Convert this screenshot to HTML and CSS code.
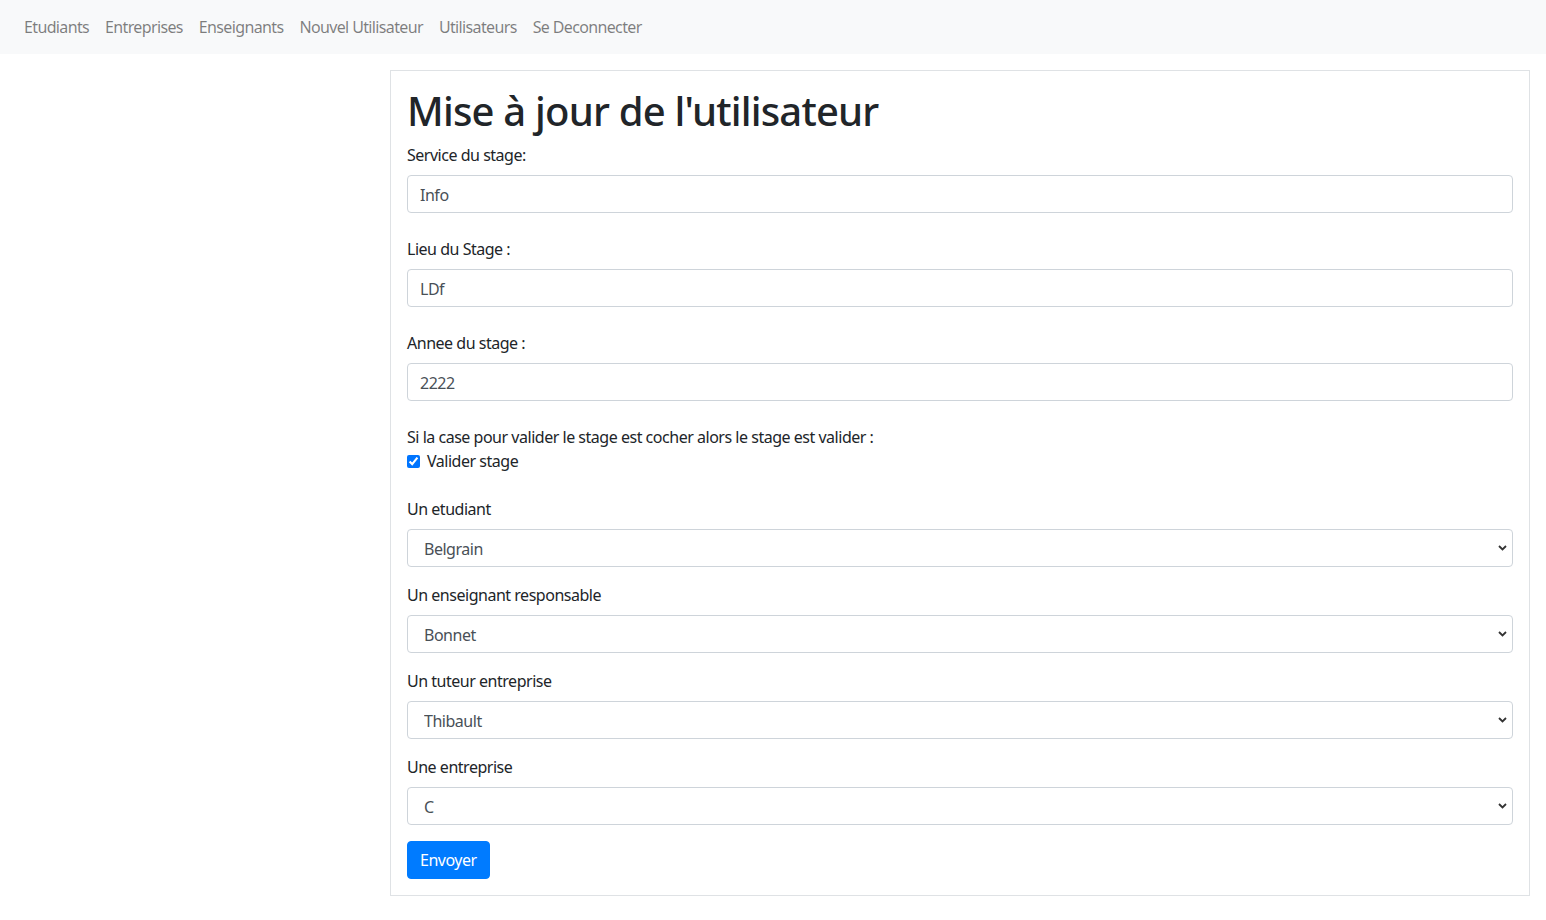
FILE: index.html
```html
<!DOCTYPE html>
<html lang="fr">
<head>
<meta charset="utf-8">
<title>Mise à jour de l'utilisateur</title>
<link rel="stylesheet" href="styles.css">
</head>
<body>
<nav class="navbar">
  <a class="nav-link" href="#">Etudiants</a>
  <a class="nav-link" href="#">Entreprises</a>
  <a class="nav-link" href="#">Enseignants</a>
  <a class="nav-link" href="#">Nouvel Utilisateur</a>
  <a class="nav-link" href="#">Utilisateurs</a>
  <a class="nav-link" href="#">Se Deconnecter</a>
</nav>
<main class="main">
  <section class="card">
    <h1 class="title">Mise à jour de l'utilisateur</h1>
    <form class="form">
      <div class="group">
        <label class="label">Service du stage:</label>
        <input class="control" type="text" value="Info">
      </div>
      <div class="group">
        <label class="label">Lieu du Stage :</label>
        <input class="control" type="text" value="LDf">
      </div>
      <div class="group">
        <label class="label">Annee du stage :</label>
        <input class="control" type="text" value="2222">
      </div>
      <div class="group check-group">
        <span class="label-plain">Si la case pour valider le stage est cocher alors le stage est valider :</span>
        <label class="check"><input type="checkbox" checked class="checkbox"> Valider stage</label>
      </div>
      <div class="sel-group">
        <label class="label">Un etudiant</label>
        <select class="control select"><option>Belgrain</option></select>
      </div>
      <div class="sel-group">
        <label class="label">Un enseignant responsable</label>
        <select class="control select"><option>Bonnet</option></select>
      </div>
      <div class="sel-group">
        <label class="label">Un tuteur entreprise</label>
        <select class="control select"><option>Thibault</option></select>
      </div>
      <div class="sel-group">
        <label class="label">Une entreprise</label>
        <select class="control select"><option>C</option></select>
      </div>
      <div><button type="button" class="btn">Envoyer</button></div>
    </form>
  </section>
</main>
</body>
</html>
```
FILE: styles.css
```css
* { box-sizing: border-box; }
html, body { margin: 0; padding: 0; }
body {
  font-family: "Noto Sans", "Open Sans", sans-serif;
  font-size: 16px;
  line-height: 1.5;
  letter-spacing: -0.03em;
  color: #212529;
  background: #fff;
}
.navbar {
  display: flex;
  align-items: center;
  height: 54px;
  padding: 0 16px;
  background: #f8f9fa;
}
.nav-link {
  padding: 0 8px;
  color: rgba(0,0,0,.5);
  text-decoration: none;
  font-size: 16px;
  letter-spacing: -0.04em;
}
.main {
  padding: 16px 16px 16px 390px;
}
.card {
  border: 1px solid #dfe2e5;
  padding: 16px;
}
.title {
  margin: 0 0 8px 0;
  font-size: 40px;
  font-weight: 500;
  line-height: 48px;
  letter-spacing: -0.02em;
}
.form { display: flex; flex-direction: column; }
.group { margin-bottom: 24px; display: flex; flex-direction: column; }
.sel-group { margin-bottom: 16px; display: flex; flex-direction: column; }
.label { display: block; margin-bottom: 8px; line-height: 24px; }
.label-plain { display: block; line-height: 24px; }
.control {
  display: block;
  width: 100%;
  height: 38px;
  padding: 7px 12px 5px;
  font-family: inherit;
  font-size: 16px;
  letter-spacing: -0.03em;
  color: #495057;
  background: #fff;
  border: 1px solid #ced4da;
  border-radius: 4px;
  outline: none;
}
.select {
  -webkit-appearance: none;
  appearance: none;
  padding-left: 16px;
  background-image: url("data:image/svg+xml,%3Csvg xmlns='http://www.w3.org/2000/svg' width='9' height='6' viewBox='0 0 9 6'%3E%3Cpath d='M1 1l3.5 3.5L8 1' fill='none' stroke='%23333' stroke-width='1.8'/%3E%3C/svg%3E");
  background-repeat: no-repeat;
  background-position: right 5px center;
  background-size: 9px 6px;
}
.check { display: flex; align-items: center; line-height: 24px; }
.checkbox {
  width: 13px; height: 13px;
  margin: 0 7px 0 0;
  accent-color: #0075ff;
}
.btn {
  height: 38px;
  padding: 6px 12px;
  font-family: inherit;
  font-size: 16px;
  line-height: 24px;
  letter-spacing: -0.03em;
  color: #fff;
  background: #007bff;
  border: 1px solid #007bff;
  border-radius: 4px;
}
```
